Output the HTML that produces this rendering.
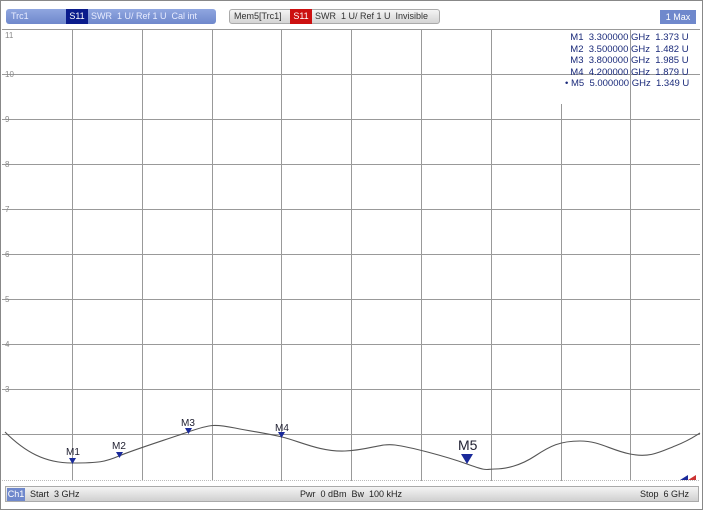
<!DOCTYPE html><html><head><style>
body{margin:0;width:703px;height:510px;background:#fff;font-family:"Liberation Sans",sans-serif;overflow:hidden;position:relative}
.a{position:absolute}
.t{font-size:9px;color:#fff}
</style></head><body>
<div class="a" style="left:0;top:0;width:703px;height:510px;border:1px solid #888;box-sizing:border-box"></div>
<div class="a" style="left:6px;top:9px;width:210px;height:15px;background:linear-gradient(#8fa6e0,#6f88cc);border-radius:3px"></div>
<div class="a t" style="left:11px;top:11px;color:#e8ecff">Trc1</div>
<div class="a t" style="left:66px;top:9px;height:15px;width:22px;background:#0a1c8c;text-align:center;line-height:15px">S11</div>
<div class="a t" style="left:91px;top:11px;color:#e8ecff">SWR &nbsp;1 U/ Ref 1 U &nbsp;Cal int</div>
<div class="a" style="left:229px;top:9px;width:211px;height:15px;background:linear-gradient(#f4f4f4,#d4d4d4);border:1px solid #aaa;border-radius:3px;box-sizing:border-box"></div>
<div class="a" style="left:234px;top:11px;font-size:9px;color:#333">Mem5[Trc1]</div>
<div class="a t" style="left:290px;top:9px;height:15px;width:22px;background:#cc1010;text-align:center;line-height:15px">S11</div>
<div class="a" style="left:315px;top:11px;font-size:9px;color:#333">SWR &nbsp;1 U/ Ref 1 U &nbsp;Invisible</div>
<div class="a t" style="left:660px;top:10px;width:36px;height:14px;background:#6f88cc;text-align:center;line-height:14px">1 Max</div>
<svg class="a" style="left:0;top:0" width="703" height="510">
<g stroke="#999" stroke-width="1" fill="none">
<path d="M2 29.5H700M2 74.5H700M2 119.5H700M2 164.5H700M2 209.5H700M2 254.5H700M2 299.5H700M2 344.5H700M2 389.5H700M2 434.5H700"/>
<path d="M72.5 29V481M142.5 29V481M212.5 29V481M281.5 29V481M351.5 29V481M421.5 29V481M491.5 29V481M561.5 29V481M630.5 29V481"/>
</g>
<path d="M2 480.5H700" stroke="#bbb" stroke-dasharray="1 1"/>
<path d="M5 432 C25 452,45 463,72 463 S105 462,119 456 S165 440,188 432 S215 424,235 428 S265 433,282 437 S320 452,345 451 S380 443,395 445 S445 456,467 464 S485 469,495 469 S520 466,535 456 S560 441,580 441 S610 450,630 454 S660 452,675 446 S695 436,700 433" stroke="#555" stroke-width="1.1" fill="none"/>
<g fill="#1a2a9a"><path d="M69 458h7l-3.5 6z"/><path d="M116 452h7l-3.5 6z"/><path d="M185 428h7l-3.5 6z"/><path d="M278 432h7l-3.5 6z"/><path d="M461 454h12l-6 10z"/><path d="M680 480l8-5v5z"/></g>
<path d="M688 480l8-5v5z" fill="#c33"/>
<g fill="#223" font-size="10" font-family="Liberation Sans"><text x="66" y="455">M1</text><text x="112" y="449">M2</text><text x="181" y="426">M3</text><text x="275" y="431">M4</text><text x="458" y="450" font-size="14">M5</text></g>
<g fill="#888" font-size="8" font-family="Liberation Sans"><text x="5" y="38">11</text><text x="5" y="77">10</text><text x="5" y="122">9</text><text x="5" y="167">8</text><text x="5" y="212">7</text><text x="5" y="257">6</text><text x="5" y="302">5</text><text x="5" y="347">4</text><text x="5" y="392">3</text></g>
</svg>
<div class="a" style="left:560px;top:30px;width:140px;height:74px;background:#fff"></div>
<div class="a" style="left:560px;top:29px;width:140px;height:1px;background:#999"></div>
<div class="a" style="left:630px;top:30px;width:1px;height:74px;background:#999"></div>
<div class="a" style="left:560px;top:74px;width:140px;height:1px;background:#999"></div>
<div class="a" style="left:565px;top:32px;font-size:9.5px;line-height:11.5px;color:#1a2a7a;white-space:pre">  M1  3.300000 GHz  1.373 U
  M2  3.500000 GHz  1.482 U
  M3  3.800000 GHz  1.985 U
  M4  4.200000 GHz  1.879 U
• M5  5.000000 GHz  1.349 U</div>
<div class="a" style="left:5px;top:486px;width:694px;height:16px;background:linear-gradient(#f4f4f4,#d0d0d0);border:1px solid #aaa;box-sizing:border-box"></div>
<div class="a t" style="left:7px;top:488px;width:18px;height:13px;background:#6f88cc;text-align:center;line-height:13px">Ch1</div>
<div class="a" style="left:30px;top:489px;font-size:9px;color:#222">Start &nbsp;3 GHz</div>
<div class="a" style="left:300px;top:489px;font-size:9px;color:#222">Pwr &nbsp;0 dBm &nbsp;Bw &nbsp;100 kHz</div>
<div class="a" style="left:640px;top:489px;font-size:9px;color:#222">Stop &nbsp;6 GHz</div>
</body></html>
